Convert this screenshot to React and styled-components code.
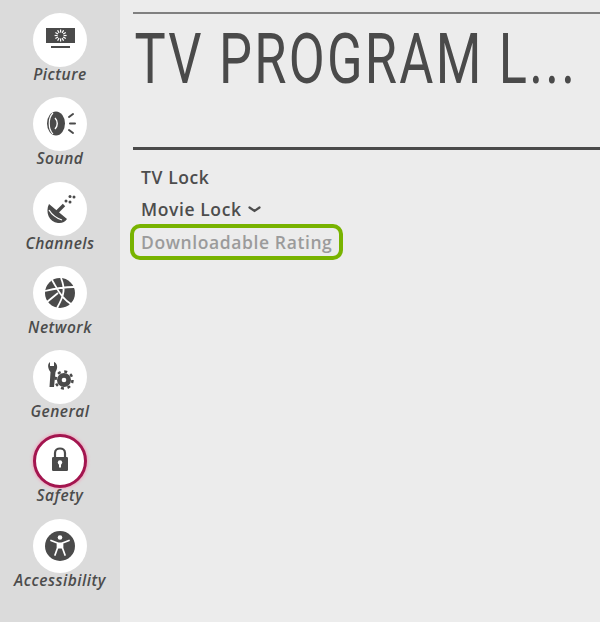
import React from "react";
import styled, { createGlobalStyle } from "styled-components";

const GlobalStyle = createGlobalStyle`
    html, body {
        margin: 0;
        padding: 0;
        background: #ececec;
    }
`

const Page = styled.div`
    display: grid;
    grid-template-columns: 120px 1fr;
    width: 600px;
    height: 622px;
    overflow: hidden;
    background: #ececec;
    color: #4a4a4a;
`

const Sidebar = styled.nav`
    display: grid;
    grid-auto-rows: 84.3px;
    padding-top: 13px;
    background: #dbdbdb;
`

const NavItem = styled.div`
    display: flex;
    flex-direction: column;
    align-items: center;
`

const Circle = styled.div`
    display: flex;
    align-items: center;
    justify-content: center;
    box-sizing: border-box;
    width: 54px;
    height: 54px;
    border-radius: 50%;
    background: #fff;
    border: ${props => props.$active ? "3px solid #a3154f" : "none"};
    box-shadow: ${props => props.$active ? "0 0 3px 1px #f0a9c0" : "none"};
`

const NavLabel = styled.div`
    margin-top: -1px;
    font-family: "Open Sans", sans-serif;
    font-size: 15.5px;
    line-height: 16px;
    font-style: italic;
    font-weight: 600;
    letter-spacing: 0.5px;
    color: #4c4c4c;
    white-space: nowrap;
`

const Main = styled.main`
    padding: 12px 10px 0 13px;
`

const ThinRule = styled.div`
    height: 1.5px;
    background: #808080;
`

const ThickRule = styled.div`
    height: 3px;
    background: #4a4a4a;
`

const TitleRow = styled.div`
    height: 133.5px;
`

const Title = styled.h1`
    width: fit-content;
    margin: 0;
    padding: 6px 0 0 2px;
    font-family: "Roboto", sans-serif;
    font-weight: 400;
    font-size: 70px;
    line-height: 78px;
    letter-spacing: 3px;
    white-space: nowrap;
    color: #4a4a4a;
    transform: scaleX(0.747);
    transform-origin: left center;
`

const MenuList = styled.div`
    display: flex;
    flex-direction: column;
    align-items: flex-start;
    padding: 11px 0 0 8px;
`

const MenuItem = styled.div`
    display: flex;
    align-items: center;
    gap: 6px;
    height: 32px;
    font-family: "Open Sans", sans-serif;
    font-size: 17.5px;
    font-weight: 600;
    letter-spacing: 0.6px;
    white-space: nowrap;
    color: #4d4d4d;
`

const HighlightBox = styled(MenuItem)`
    margin: -1px 0 0 -11px;
    padding: 0 7px;
    height: 28px;
    border: 4px solid #78b300;
    border-radius: 10px;
    color: #9b9b9b;
`

function PictureIcon() {
    const rays = [0, 30, 60, 90, 120, 150, 180, 210, 240, 270, 300, 330]
    return <svg width="54" height="54" viewBox="0 0 54 54">
        <rect x="13" y="15" width="29" height="15" fill="#4a4a4a" />
        <rect x="18" y="33" width="19" height="2" fill="#4a4a4a" />
        {rays.map(r => <rect key={r} x="27" y="16.5" width="1.2" height="3" fill="#fff" transform={`rotate(${r} 27.6 22.5)`} />)}
    </svg>
}

function SoundIcon() {
    return <svg width="54" height="54" viewBox="0 0 54 54">
        <ellipse cx="23" cy="26.5" rx="9" ry="12" fill="#4a4a4a" />
        <path d="M20 16 C15 21 15 32 20 37" fill="none" stroke="#fff" strokeWidth="1.2" />
        <path d="M22 21 C25 24 25 29 22 32" fill="none" stroke="#fff" strokeWidth="1.4" />
        <path d="M36 20 L40 17 M37 26.5 L42 26.5 M36 33 L40 36" stroke="#4a4a4a" strokeWidth="2" strokeLinecap="round" />
    </svg>
}

function ChannelsIcon() {
    return <svg width="54" height="54" viewBox="0 0 54 54">
        <path d="M16 22 C12 30 16 40 25 41 C29 41.5 32 40 34 37 Z" fill="#4a4a4a" />
        <path d="M16 28 C19 33 23 36 29 38" fill="none" stroke="#fff" strokeWidth="1.3" />
        <path d="M24 30 L31 23" stroke="#4a4a4a" strokeWidth="3.4" />
        <circle cx="33" cy="19" r="1.5" fill="#4a4a4a" />
        <circle cx="37" cy="14.5" r="1.5" fill="#4a4a4a" />
        <circle cx="37" cy="20" r="1.5" fill="#4a4a4a" />
        <circle cx="41" cy="15" r="1.5" fill="#4a4a4a" />
    </svg>
}

function NetworkIcon() {
    return <svg width="54" height="54" viewBox="0 0 54 54">
        <circle cx="27" cy="27" r="15" fill="#4a4a4a" />
        <path d="M19 14 C23 20 27 32 38 38 M12 25 C20 23 30 21 41 21 M25 27 L14 36 M28 12 C32 22 32 28 24 42" fill="none" stroke="#fff" strokeWidth="1.8" />
    </svg>
}

function GeneralIcon() {
    return <svg width="54" height="54" viewBox="0 0 54 54">
        <path d="M17 12 L17 16 L21 16 L21 12 C24 13 25 17 23.5 20 L22.5 22 L21 37 L16.5 37 L17.5 22 C15 19 14 14 17 12 Z" fill="#4a4a4a" />
        <circle cx="31" cy="30" r="7" fill="#4a4a4a" />
        <circle cx="31" cy="30" r="8.5" fill="none" stroke="#4a4a4a" strokeWidth="2.5" strokeDasharray="3 3.67" />
        <circle cx="31" cy="30" r="2.3" fill="#fff" />
    </svg>
}

function SafetyIcon() {
    return <svg width="48" height="48" viewBox="0 0 48 48">
        <path d="M19 21 V16 C19 10 29 10 29 16 V21" fill="none" stroke="#4a4a4a" strokeWidth="2.2" />
        <rect x="16" y="20" width="16" height="14" rx="1.2" fill="#4a4a4a" />
        <circle cx="24" cy="25.5" r="2.2" fill="#fff" />
        <rect x="23" y="26" width="2" height="4.5" fill="#fff" />
    </svg>
}

function AccessibilityIcon() {
    return <svg width="54" height="54" viewBox="0 0 54 54">
        <circle cx="27" cy="27" r="15" fill="#4a4a4a" />
        <circle cx="27" cy="18.5" r="2.3" fill="#fff" />
        <path d="M18 21.5 L24.5 24 L24.5 29 L22 36 M36 21.5 L29.5 24 L29.5 29 L32 36" fill="none" stroke="#fff" strokeWidth="1.7" strokeLinecap="round" strokeLinejoin="round" />
        <rect x="24.5" y="23.5" width="5" height="6" fill="#fff" />
    </svg>
}

const navItems = [
    { label: "Picture", icon: <PictureIcon /> },
    { label: "Sound", icon: <SoundIcon /> },
    { label: "Channels", icon: <ChannelsIcon /> },
    { label: "Network", icon: <NetworkIcon /> },
    { label: "General", icon: <GeneralIcon /> },
    { label: "Safety", icon: <SafetyIcon />, active: true },
    { label: "Accessibility", icon: <AccessibilityIcon /> },
]

export default function App() {
    return <>
        <GlobalStyle />
        <Page>
            <Sidebar>
                {navItems.map(item => <NavItem key={item.label}>
                    <Circle $active={item.active}>{item.icon}</Circle>
                    <NavLabel>{item.label}</NavLabel>
                </NavItem>)}
            </Sidebar>
            <Main>
                <ThinRule />
                <TitleRow><Title>TV PROGRAM L...</Title></TitleRow>
                <ThickRule />
                <MenuList>
                    <MenuItem>TV Lock</MenuItem>
                    <MenuItem>Movie Lock
                        <svg width="13" height="7" viewBox="0 0 13 7"><path d="M1.5 1.5 L6.5 5 L11.5 1.5" fill="none" stroke="#4d4d4d" strokeWidth="2.2" strokeLinecap="round" /></svg>
                    </MenuItem>
                    <HighlightBox>Downloadable Rating</HighlightBox>
                </MenuList>
            </Main>
        </Page>
    </>
}
